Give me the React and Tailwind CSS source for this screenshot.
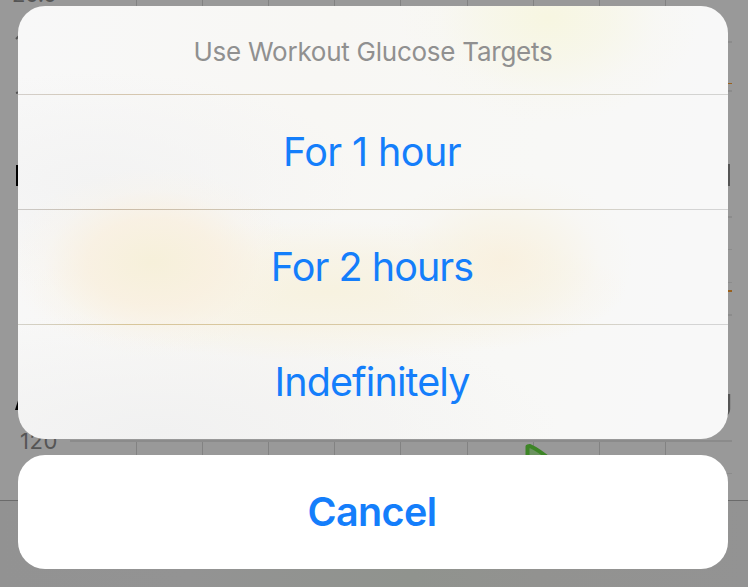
const gridX = [136, 202, 268, 334, 400, 467, 533, 599, 665];

// The dimmed charts that lie behind the action sheet.
function DimmedCharts() {
  return (
    <svg
      className="absolute inset-0 h-full w-full font-['Inter','Liberation_Sans',sans-serif]"
      viewBox="0 0 748 587"
      aria-hidden="true"
    >
      <defs>
        <linearGradient id="toolbar" x1="0" x2="1" y1="0" y2="0">
          <stop offset="0" stopColor="#929292" />
          <stop offset="0.25" stopColor="#939393" />
          <stop offset="0.55" stopColor="#90938e" />
          <stop offset="0.72" stopColor="#929290" />
          <stop offset="1" stopColor="#939393" />
        </linearGradient>
      </defs>
      <rect width="748" height="587" fill="#999999" />
      <rect y="501" width="748" height="86" fill="url(#toolbar)" />
      <rect y="500" width="748" height="1" fill="#6b6b6b" />
      {gridX.map((x) => (
        <g key={x} fill="#828282">
          <rect x={x} y="0" width="1" height="10" />
          <rect x={x} y="441" width="1" height="20" />
        </g>
      ))}
      <rect x="70" y="440" width="662" height="2" fill="#8b8b8b" />
      <g fill="#8c8c8c">
        <rect x="720" y="41" width="12" height="2" />
        <rect x="720" y="90" width="12" height="2" />
        <rect x="720" y="216" width="12" height="2" />
        <rect x="720" y="249" width="12" height="1" />
        <rect x="720" y="282" width="12" height="1" />
        <rect x="720" y="314" width="12" height="2" />
        <rect x="720" y="473" width="12" height="1" />
      </g>
      <rect x="720" y="83" width="12" height="1" fill="#99601c" />
      <rect x="720" y="290" width="12" height="2" fill="#99601c" />
      <rect x="724" y="164" width="6" height="22" fill="#555555" />
      <path d="M729 394V409Q729 413 725 416" fill="none" stroke="#555555" strokeWidth="2.4" />
      <rect x="16" y="165" width="4" height="21" fill="#000000" />
      <path d="M15 410L22 388V410Z" fill="#000000" />
      <path d="M16 39L20 35M16 93L20 92" stroke="#555555" strokeWidth="2" />
      <text x="12" y="1.5" fontSize="22" textLength="45" fill="#555555">20.0</text>
      <text x="20" y="449" fontSize="22" textLength="37.5" fill="#555555">120</text>
      <path
        d="M527.5 463V446.5L530 446Q539 450 552 461"
        fill="#6b9160"
        stroke="#3d8526"
        strokeWidth="4"
        strokeLinejoin="round"
      />
    </svg>
  );
}

const actions = [
  { label: "For 1 hour", style: "tracking-[-0.6px]", line: "bg-[linear-gradient(90deg,#d3cfcb,#d5c6af_14%,#d8cfb8_45%,#d9d2b8_75%,#d3d3d1_92%)]" },
  { label: "For 2 hours", style: "tracking-[-0.95px]", line: "bg-[linear-gradient(90deg,#cbc9c7,#cbbca8_14%,#d2cbb9_40%,#d5ceb9_75%,#d4d4d4_90%)]" },
  { label: "Indefinitely", style: "tracking-[-0.9px]", line: "bg-[linear-gradient(90deg,#d3d1ca,#d8c69a_15%,#d9c9a4_50%,#d9cfb0_75%,#d4d4d4_88%)]" },
];

export default function App() {
  return (
    <div className="relative h-[587px] w-[748px] overflow-hidden bg-[#999999] font-['Inter','Liberation_Sans',sans-serif]">
      <DimmedCharts />
      <main className="relative flex flex-col gap-4 pt-[6px] pr-5 pl-[18px]">
        <section className="relative h-[433px] overflow-hidden rounded-[27px] bg-[radial-gradient(ellipse_150px_105px_at_530px_12px,rgb(247_246_225),rgb(247_246_229_/_0.7)_40%,rgb(247_246_235_/_0.25)_72%,transparent),radial-gradient(ellipse_145px_95px_at_135px_256px,rgb(246_240_218),rgb(249_240_224_/_0.85)_45%,rgb(249_243_232_/_0.3)_75%,transparent),radial-gradient(ellipse_130px_90px_at_485px_255px,rgb(249_240_222_/_0.9),rgb(248_242_226_/_0.65)_40%,rgb(248_244_236_/_0.25)_75%,transparent),radial-gradient(ellipse_300px_70px_at_310px_285px,rgb(247_242_224),rgb(247_242_226_/_0.7)_50%,transparent),radial-gradient(ellipse_260px_110px_at_80px_175px,#f3f3f3,transparent),radial-gradient(ellipse_400px_120px_at_140px_425px,#f1f1f1,transparent),linear-gradient(100deg,#f8f8f8,#f8f7f4_40%,#f8f8f6_70%,#f8f8f8_90%)]">
          <h1 className="flex h-[88px] items-center justify-center pt-[3px] text-[26px] leading-none font-normal tracking-[-0.25px] whitespace-nowrap text-[#909090]">
            Use Workout Glucose Targets
          </h1>
          {actions.map(({ label, style, line }) => (
            <div key={label} className="h-[115px]">
              <div className={`h-px ${line}`} />
              <button className={`flex h-[114px] w-full items-center justify-center pt-[2px] pr-[2px] text-[39.5px] leading-none whitespace-nowrap text-[#147efb] ${style}`}>
                {label}
              </button>
            </div>
          ))}
        </section>
        <button className="flex h-[114px] items-center justify-center rounded-[27px] bg-white pt-[2px] pr-[2px] text-[39.5px] leading-none font-semibold tracking-[-0.6px] text-[#147efb]">
          Cancel
        </button>
      </main>
    </div>
  );
}
